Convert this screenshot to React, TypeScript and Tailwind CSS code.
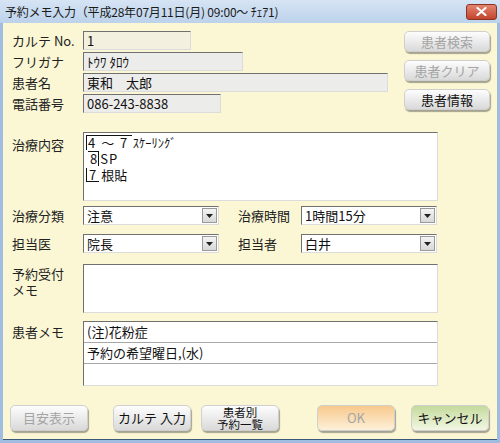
import type { ReactNode } from 'react';

const font = { fontFamily: '"Noto Sans CJK JP", "Liberation Sans", sans-serif' };

// sunken field edge: dark top/left, light bottom/right
const inset =
  'border border-t-[#707070] border-l-[#707070] border-r-[#dcdcdc] border-b-[#dcdcdc]';

function Label({ children, className = 'w-[71px]' }: { children: ReactNode; className?: string }) {
  return <div className={`shrink-0 text-[13px] leading-4 text-[#222] ${className}`}>{children}</div>;
}

function Field({ value, w, bg = 'bg-[#ececea]' }: { value: string; w: string; bg?: string }) {
  return (
    <div className={`${w} h-[19px] ${bg} ${inset} flex items-center pl-[3px] text-[13px] text-[#111]`}>{value}</div>
  );
}

function Select({ value }: { value: string }) {
  return (
    <div className={`w-[136px] h-[19px] bg-white ${inset} flex items-center justify-between`}>
      <span className="pl-[3px] text-[13px] text-[#111]">{value}</span>
      <span className="w-[15px] h-[15px] mr-[1px] bg-gradient-to-b from-[#f4f4f4] to-[#d8d8d8] border border-[#9a9a9a] flex items-center justify-center">
        <svg width="7" height="4" viewBox="0 0 7 4">
          <path d="M0 0h7L3.5 4z" fill="#222" />
        </svg>
      </span>
    </div>
  );
}

function Btn({
  children,
  w = 'w-[78px]',
  h = 'h-[26px]',
  tone = 'gray',
  disabled = false,
}: {
  children: ReactNode;
  w?: string;
  h?: string;
  tone?: 'gray' | 'orange' | 'green';
  disabled?: boolean;
}) {
  const bg =
    tone === 'orange'
      ? 'bg-gradient-to-b from-[#f7c98c] to-[#fdf0d8]'
      : tone === 'green'
        ? 'bg-gradient-to-b from-[#c5da9c] to-[#f2f7e2]'
        : 'bg-gradient-to-b from-[#fdfdfd] to-[#d9d9d9]';
  return (
    <div
      className={`${w} ${h} ${bg} rounded-[5px] border border-[#cfcfcf] shadow-[1px_2px_1px_rgba(60,60,60,0.45)] flex items-center justify-center text-[13px] ${disabled ? 'text-[#a4a4a4]' : 'text-[#111]'}`}
    >
      {children}
    </div>
  );
}

export default function App() {
  return (
    <div className="w-[500px] h-[443px] flex flex-col bg-[#9fbde0]" style={font}>
      {/* title bar */}
      <div className="h-[23px] shrink-0 bg-gradient-to-b from-[#d6e4f4] to-[#bcd2eb] flex items-center justify-between pl-[5px] pr-[3px]">
        <span className="text-[12px] text-[#1a1a1a] tracking-[-0.2px]">予約メモ入力（平成28年07月11日(月) 09:00～ ﾁｪｱ1)</span>
        <div className="w-[31px] h-[16px] rounded-[3px] border border-[#8a3424] bg-gradient-to-b from-[#e4846e] to-[#c2432c] flex items-center justify-center">
          <svg width="11" height="9" viewBox="0 0 11 9">
            <path d="M1.5 1l8 7M9.5 1l-8 7" stroke="white" strokeWidth="2.2" strokeLinecap="round" />
          </svg>
        </div>
      </div>

      <div className="flex-1 mx-[3px] mb-[3px] border-b border-[#3b5a7a] bg-[#fbf7d4] pl-[9px] pt-[8px] flex flex-col">
        {/* patient block */}
        <div className="flex">
          <div className="flex flex-col gap-[2px]">
            <div className="flex items-center">
              <Label>カルテ No.</Label>
              <Field value="1" w="w-[108px]" bg="bg-[#f3f0e0]" />
            </div>
            <div className="flex items-center">
              <Label>フリガナ</Label>
              <Field value="ﾄｳﾜ ﾀﾛｳ" w="w-[160px]" />
            </div>
            <div className="flex items-center">
              <Label>患者名</Label>
              <Field value="東和　太郎" w="w-[305px]" />
            </div>
            <div className="flex items-center">
              <Label>電話番号</Label>
              <Field value="086-243-8838" w="w-[138px]" />
            </div>
          </div>
          <div className="ml-[16px] flex flex-col gap-[8px]">
            <Btn w="w-[86px]" h="h-[21px]" disabled>患者検索</Btn>
            <Btn w="w-[86px]" h="h-[21px]" disabled>患者クリア</Btn>
            <Btn w="w-[86px]" h="h-[21px]">患者情報</Btn>
          </div>
        </div>

        {/* treatment detail with tooth quadrant marks */}
        <div className="flex mt-[19px]">
          <Label className="w-[71px] pt-[5px]">治療内容</Label>
          <div className={`w-[355px] h-[69px] bg-white ${inset} pl-[2px] pt-[2px] flex flex-col gap-[1px] text-[13px] text-[#111]`}>
            <div className="flex items-center h-[15px]">
              <span className="border-t border-l border-[#111] pl-[1px] pr-[3px] leading-[14px] tracking-[1.5px]">4 ～ 7</span>
              <span className="ml-[1px] text-[12.5px] leading-[14px]">ｽｹｰﾘﾝｸﾞ</span>
            </div>
            <div className="flex items-center h-[15px]">
              <span className="ml-[2px] border-t border-r border-[#111] pl-[2px] pr-[1px] leading-[14px]">8</span>
              <span className="ml-[1px] leading-[14px] tracking-[1px]">SP</span>
            </div>
            <div className="flex items-center h-[15px]">
              <span className="border-b border-l border-[#111] pl-[2px] pr-[3px] leading-[13px]">7</span>
              <span className="ml-[2px] leading-[14px]">根貼</span>
            </div>
          </div>
        </div>

        <div className="flex items-center mt-[5px]">
          <Label>治療分類</Label>
          <Select value="注意" />
          <Label className="ml-[19px] w-[63px]">治療時間</Label>
          <Select value="1時間15分" />
        </div>
        <div className="flex items-center mt-[9px]">
          <Label>担当医</Label>
          <Select value="院長" />
          <Label className="ml-[19px] w-[63px]">担当者</Label>
          <Select value="白井" />
        </div>

        <div className="flex mt-[11px]">
          <Label className="w-[71px] pt-[2px]">
            予約受付
            <br />
            メモ
          </Label>
          <div className={`w-[355px] h-[49px] bg-white ${inset}`} />
        </div>

        <div className="flex mt-[8px]">
          <Label className="w-[71px] pt-[3px]">患者メモ</Label>
          <div className={`w-[355px] h-[65px] bg-white ${inset} flex flex-col text-[13px] text-[#111]`}>
            <div className="h-[21px] border-b border-[#a8a8a8] flex items-center pl-[3px]">(注)花粉症</div>
            <div className="h-[21px] border-b border-[#a8a8a8] flex items-center pl-[3px]">予約の希望曜日,(水)</div>
            <div className="flex-1" />
          </div>
        </div>

        {/* action buttons */}
        <div className="flex mt-[19px] -ml-[2px]">
          <Btn disabled>目安表示</Btn>
          <div className="ml-[25px]">
            <Btn>カルテ 入力</Btn>
          </div>
          <div className="ml-[10px]">
            <Btn>
              <span className="text-center text-[11.5px] leading-[12px]">
                患者別
                <br />
                予約一覧
              </span>
            </Btn>
          </div>
          <div className="ml-[38px]">
            <Btn tone="orange" disabled>
              OK
            </Btn>
          </div>
          <div className="ml-[16px]">
            <Btn tone="green">キャンセル</Btn>
          </div>
        </div>
      </div>
    </div>
  );
}
